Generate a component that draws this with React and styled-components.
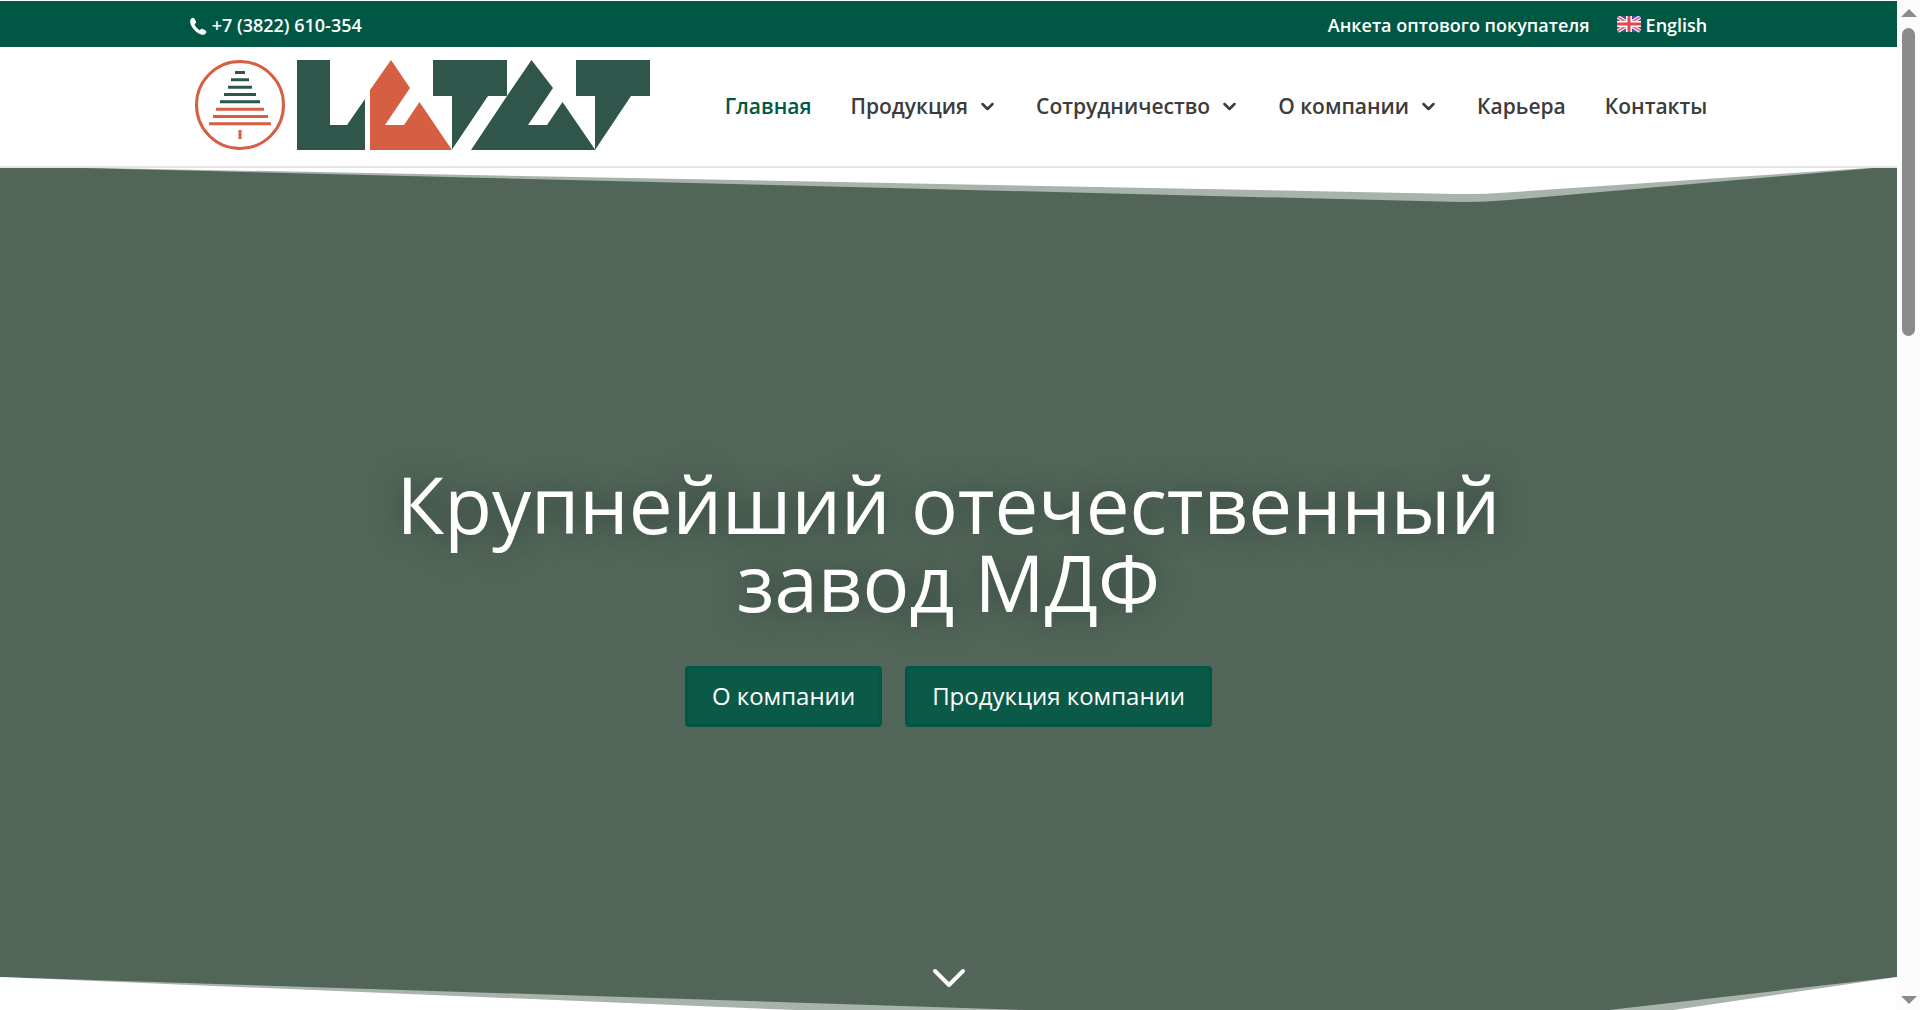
import React from 'react';
import styled, { createGlobalStyle } from 'styled-components';

const GlobalStyle = createGlobalStyle`
  * {
    box-sizing: border-box;
  }
  body {
    margin: 0;
    background: #fff;
    font-family: "Open Sans", "Noto Sans", sans-serif;
    color: #3c3c3c;
  }
  a {
    text-decoration: none;
    color: inherit;
  }
`;

const menu = [
  { title: 'Главная', active: true },
  { title: 'Продукция', children: true },
  { title: 'Сотрудничество', children: true },
  { title: 'О компании', children: true },
  { title: 'Карьера' },
  { title: 'Контакты' },
];

const PhoneIcon = () => (
  <svg width="17" height="20" viewBox="0 0 17 20" aria-hidden="true">
    <path
      fill="#fff"
      d="M1.200 3.600C2.400 2.400 3.600 2.300 4.400 3.600l1.500 2.900c.5 1 .1 1.700-.8 2.300-.6.4-.6.8-.2 1.500.9 1.700 2.400 3.400 4.100 4.500.7.4 1.100.3 1.500-.2.6-.9 1.300-1.200 2.200-.7l2.900 1.700c1 .7 1 1.900.1 2.900-1.200 1.300-3.100 1.600-5.200.7C6 17.200 2 13.100.5 8.700-.1 6.700 0 4.800 1.200 3.600z"
    />
  </svg>
);

const FlagIcon = () => (
  <svg width="24" height="18" viewBox="0 0 24 18" aria-hidden="true">
    <path fill="#4150a5" d="M0 0h24v16H0z" />
    <path stroke="#f3eef5" strokeWidth="4" d="M1 1l22 14M23 1L1 15" />
    <path stroke="#e2666f" strokeWidth="1.500" d="M1 1l22 14M23 1L1 15" />
    <path stroke="#fff" strokeWidth="6" d="M12 0v16M0 8h24" />
    <path stroke="#e2484f" strokeWidth="3" d="M12 0v16M0 8h24" />
  </svg>
);

const MenuArrow = () => (
  <svg width="13" height="9" viewBox="0 0 13 9" aria-hidden="true">
    <path fill="none" stroke="#3c3c3c" strokeWidth="2.500" strokeLinecap="round" strokeLinejoin="round" d="M1.500 2L6.500 7l5-5" />
  </svg>
);

const Logo = () => (
  <svg width="456" height="92" viewBox="0 0 456 92" role="img" aria-label="LATAT">
    <circle cx="45" cy="46" r="43.500" fill="none" stroke="#d65f43" strokeWidth="3" />
    <g fill="#30564b">
      <path d="M40 12h10v3H40zM36 19.300h18v3H36zM33 26.700h24v3H33zM29 34h32v3H29zM25 41.300h40v3H25z" />
      <path d="M102 1h33v65h17l18-26v51h-68z" />
      <path d="M238 1h74v36l24.500-36L358 29l-25 37h19l15.500-23L400 90.500V37h-19V1h74v36h-19l-36 54H276l36-54h-19l-36 53.500V37h-19z" />
    </g>
    <g fill="#d65f43">
      <path d="M21 48.700h48v3H21zM18 56h55v3H18zM14 63.300h62v3H14zM43.500 71h3v9h-3z" />
      <path d="M175 31L196 1l19 28-25 37h19l15.500-23L257 91h-82z" />
    </g>
  </svg>
);

const App = () => {
  return (
    <Shell>
      <GlobalStyle />
      <Page>
        <TopBar>
          <Container>
            <TopLink href="tel:+73822610354">
              <PhoneIcon />
              +7 (3822) 610-354
            </TopLink>
            <TopMenu>
              <TopLink href="#anketa">Анкета оптового покупателя</TopLink>
              <TopLink href="#en">
                <FlagIcon />
                English
              </TopLink>
            </TopMenu>
          </Container>
        </TopBar>
        <Header>
          <Container>
            <LogoLink href="#home">
              <Logo />
            </LogoLink>
            <Nav>
              {menu.map((item) => (
                <NavLink key={item.title} href="#menu" $active={item.active} $parent={item.children}>
                  {item.title}
                  {item.children && <MenuArrow />}
                </NavLink>
              ))}
            </Nav>
          </Container>
        </Header>
        <Hero>
          <TopDivider viewBox="0 0 1280 140" preserveAspectRatio="none" aria-hidden="true">
            <path fillOpacity=".5" d="M1280 0l-262.100 116.260a73.290 73.290 0 0 1-39.090 6L0 0z" />
            <path d="M1280 0l-266 91.520a72.590 72.590 0 0 1-30.760 3.710L0 0z" />
          </TopDivider>
          <Title>Крупнейший отечественный завод МДФ</Title>
          <Buttons>
            <HeroButton href="#about">О компании</HeroButton>
            <HeroButton href="#products">Продукция компании</HeroButton>
          </Buttons>
          <ScrollDown href="#next" aria-label="Вниз">
            <svg width="34" height="20" viewBox="0 0 34 20" aria-hidden="true">
              <path fill="none" stroke="#fff" strokeWidth="4" strokeLinecap="round" strokeLinejoin="round" d="M3 3l14 14L31 3" />
            </svg>
          </ScrollDown>
          <BottomDivider viewBox="0 0 1280 140" preserveAspectRatio="none" aria-hidden="true">
            <path fillOpacity=".5" d="M1280 0l-266 91.520a72.590 72.590 0 0 1-30.760 3.710L0 0v140h1280z" />
            <path d="M1280 0l-262.100 116.260a73.290 73.290 0 0 1-39.090 6L0 0v140h1280z" />
          </BottomDivider>
        </Hero>
      </Page>
      <ScrollTrack aria-hidden="true">
        <svg width="16" height="10" viewBox="0 0 16 10">
          <path fill="#8b8b8b" d="M8 0l8 8H0z" />
        </svg>
        <ScrollThumb />
        <svg width="16" height="10" viewBox="0 0 16 10">
          <path fill="#8b8b8b" d="M0 1h16L8 9z" />
        </svg>
      </ScrollTrack>
    </Shell>
  );
};

const Shell = styled.div`
  display: flex;
  height: 100vh;
  overflow: hidden;
`;

const Page = styled.div`
  flex: 1;
  min-width: 0;
`;

const Container = styled.div`
  width: 80%;
  margin: 0 auto;
  display: flex;
  align-items: center;
  justify-content: space-between;
`;

const TopBar = styled.div`
  border-top: 1px solid #fff;
  background-color: #005844;
  padding: 13px 0 11px;
`;

const TopMenu = styled.div`
  display: flex;
  gap: 27px;
`;

const TopLink = styled.a`
  display: flex;
  align-items: center;
  gap: 5px;
  color: #fff;
  font-size: 18px;
  font-weight: 600;
  line-height: 22px;
  white-space: nowrap;
`;

const Header = styled.header`
  position: relative;
  z-index: 1;
  background-color: #fff;
  padding: 12px 0 15px;
  border-bottom: 2px solid #e6e6e6;
`;

const LogoLink = styled.a`
  display: flex;
  padding-left: 5px;
`;

const Nav = styled.nav`
  display: flex;
  gap: 39px;
  padding-top: 2px;
`;

const NavLink = styled.a`
  display: flex;
  align-items: center;
  gap: 13px;
  padding-right: ${(props) => (props.$parent ? '3px' : '0')};
  font-size: 21px;
  font-weight: 600;
  line-height: 30px;
  white-space: nowrap;
  color: ${(props) => (props.$active ? '#005844' : '#3c3c3c')};
`;

const Hero = styled.section`
  position: relative;
  height: calc(100vh - 132px);
  padding-top: 297px;
  background-color: #516659;
  display: flex;
  flex-direction: column;
  align-items: center;
`;

const Divider = styled.svg`
  position: absolute;
  left: 0;
  width: 100%;
  fill: #fff;
`;

const TopDivider = styled(Divider)`
  top: -2px;
  height: 41px;
`;

const BottomDivider = styled(Divider)`
  bottom: 0;
  height: 69px;
`;

const Title = styled.h1`
  margin: 0 0 45px;
  max-width: 64%;
  color: #fff;
  font-size: 78px;
  font-weight: 400;
  line-height: 78px;
  text-align: center;
  text-shadow: 0 0 30px rgba(0, 0, 0, 0.4);
`;

const Buttons = styled.div`
  display: flex;
  gap: 23px;
`;

const HeroButton = styled.a`
  padding: 10px 24px 11px;
  border: 3px solid #005844;
  border-radius: 4px;
  background-color: #0b5a48;
  color: #fff;
  font-size: 24px;
  line-height: 34px;
`;

const ScrollDown = styled.a`
  display: flex;
  margin-top: auto;
  margin-bottom: 58px;
`;

const ScrollTrack = styled.div`
  width: 23px;
  height: 100vh;
  padding: 9px 0 5px;
  background-color: #fcfcfc;
  display: flex;
  flex-direction: column;
  align-items: center;
  justify-content: space-between;
`;

const ScrollThumb = styled.div`
  width: 13px;
  height: 308px;
  margin: 9px 0 auto;
  border-radius: 7px;
  background-color: #8b8b8b;
`;

export default App;
